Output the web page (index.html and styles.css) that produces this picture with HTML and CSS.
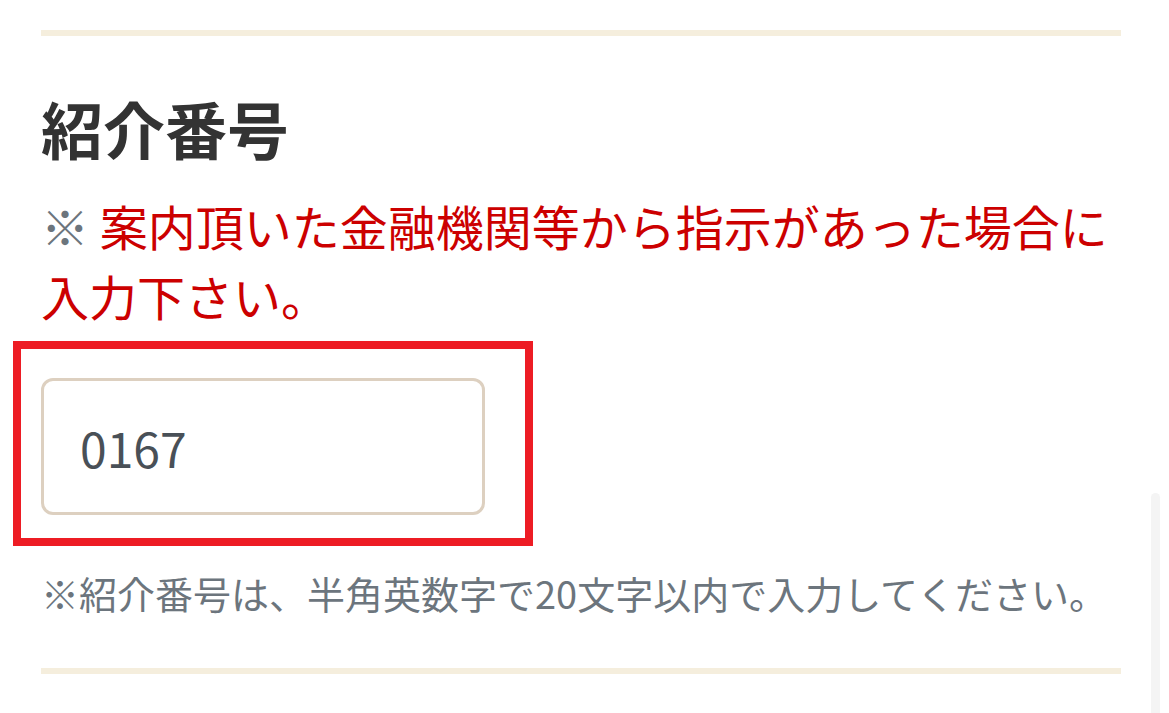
FILE: index.html
```html
<!DOCTYPE html>
<html lang="ja">
<head>
<meta charset="utf-8">
<title>紹介番号</title>
<link rel="stylesheet" href="styles.css">
</head>
<body>
<div class="page">
  <section class="section">
    <hr class="rule">
    <h2 class="title">紹介番号</h2>
    <p class="notice"><span class="mark">※</span> 案内頂いた金融機関等から指示があった場合に入力下さい。</p>
    <div class="field">
      <input class="input" type="text" value="0167" aria-label="紹介番号">
      <span class="highlight" aria-hidden="true"></span>
    </div>
    <p class="help">※紹介番号は、半角英数字で20文字以内で入力してください。</p>
    <hr class="rule rule-bottom">
  </section>
</div>
<div class="scrolltrack" aria-hidden="true"></div>
</body>
</html>
```

FILE: styles.css
```css
html, body {
  margin: 0;
  padding: 0;
  background: #ffffff;
}

body {
  font-family: "Noto Sans CJK JP", "Noto Sans", sans-serif;
  overflow: hidden;
  height: 713px;
}

.page {
  padding: 30px 48px 0 41px;
}

.section {
  width: 1080px;
}

.rule {
  margin: 0;
  border: 0;
  height: 6px;
  background: #f5eedd;
}

.title {
  margin: 47px 0 0;
  font-size: 62px;
  line-height: 90px;
  font-weight: 700;
  color: #333333;
}

.notice {
  margin: 17px 0 0;
  font-size: 48px;
  line-height: 70px;
  color: #cc0000;
}

.mark {
  color: #6c757d;
}

.field {
  position: relative;
  margin-top: 48px;
  width: 444px;
}

.input {
  display: block;
  box-sizing: border-box;
  width: 444px;
  height: 137px;
  margin: 0;
  padding: 0 0 0 36px;
  border: 3px solid #ddd0c0;
  border-radius: 12px;
  background: #ffffff;
  font-family: "Noto Sans CJK JP", "Noto Sans", sans-serif;
  font-size: 48px;
  color: #495057;
  outline: none;
}

.highlight {
  position: absolute;
  left: -28px;
  top: -37px;
  right: -48px;
  bottom: -31px;
  border: 8px solid #ed1c24;
  pointer-events: none;
}

.help {
  margin: 51px 0 0;
  font-size: 38px;
  line-height: 54px;
  color: #6c757d;
}

.rule-bottom {
  margin-top: 48px;
}

.scrolltrack {
  position: absolute;
  left: 1151px;
  top: 493px;
  width: 9px;
  height: 230px;
  border-radius: 5px;
  background: #f4f4f4;
}
```
